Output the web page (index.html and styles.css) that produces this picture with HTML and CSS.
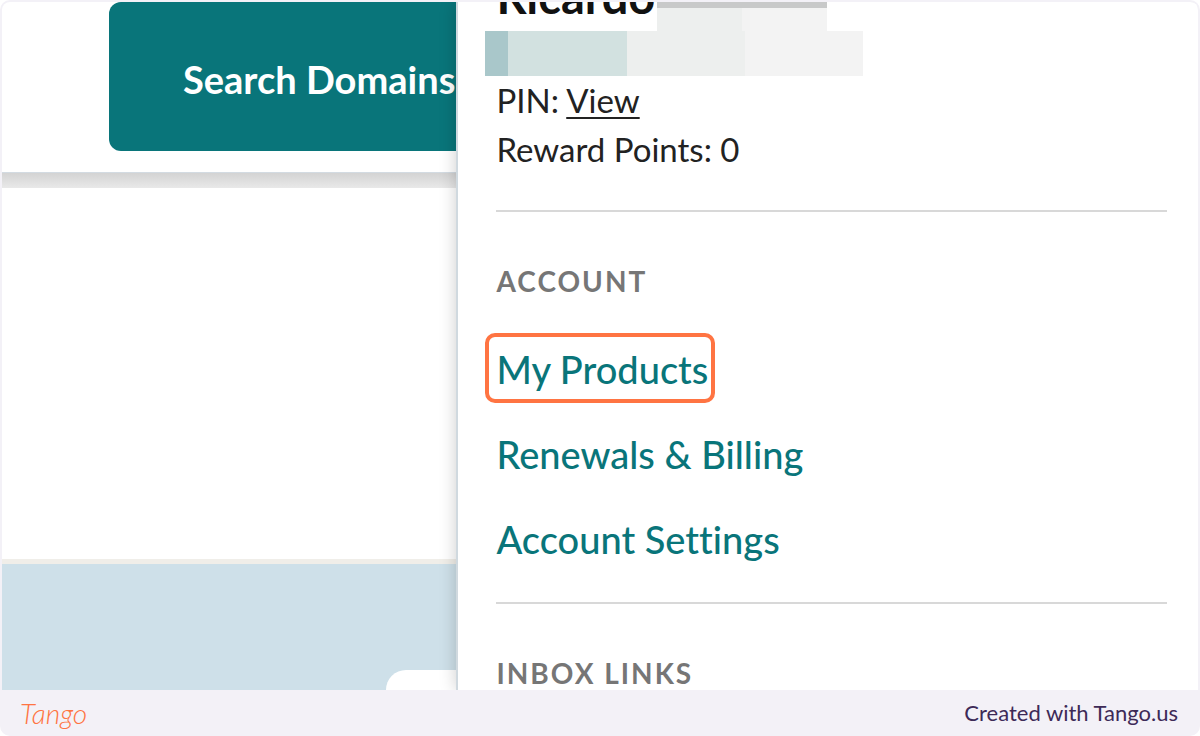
FILE: index.html
```
<!DOCTYPE html>
<html lang="en">
<head>
  <meta charset="UTF-8">
  <meta name="viewport" content="width=device-width, initial-scale=1">
  <title>My Products</title>
  <link rel="stylesheet" href="styles.css">
</head>
<body>
  <div class="frame">
    <div class="screen">
      <main class="page">
        <div class="topbar">
          <button class="search-button" type="button">Search Domains</button>
        </div>
        <div class="topbar-shadow"></div>
        <div class="blank"></div>
        <div class="promo">
          <div class="promo-card"></div>
        </div>
      </main>

      <aside class="panel">
        <div class="name-row">
          <strong class="name">Ricardo</strong>
          <div class="mask mask-name">
            <span class="tone-3"></span>
            <span class="tone-4"></span>
          </div>
        </div>
        <div class="mask mask-id">
          <span class="tone-1"></span>
          <span class="tone-2"></span>
          <span class="tone-3"></span>
          <span class="tone-4"></span>
        </div>
        <p class="info">PIN: <a href="#">View</a></p>
        <p class="info">Reward Points: 0</p>

        <section class="group">
          <h2>Account</h2>
          <ul>
            <li><a class="highlight" href="#">My Products</a></li>
            <li><a href="#">Renewals &amp; Billing</a></li>
            <li><a href="#">Account Settings</a></li>
          </ul>
        </section>

        <section class="group">
          <h2>Inbox Links</h2>
        </section>
      </aside>
    </div>

    <footer class="footer">
      <span class="logo">Tango</span>
      <span class="credit">Created with Tango.us</span>
    </footer>
  </div>
</body>
</html>
```
FILE: styles.css
```
* {
  box-sizing: border-box;
}

body {
  margin: 0;
  background: #fff;
  font-family: Lato, "Open Sans", sans-serif;
  font-variant-ligatures: none;
}

.frame {
  display: flex;
  flex-direction: column;
  height: 100vh;
  padding: 2px 2px 0;
  background: #f3f1f7;
  border-radius: 10px;
  overflow: hidden;
}

.screen {
  flex: 1;
  min-height: 0;
  display: grid;
  grid-template-columns: 38fr 62fr;
  grid-template-rows: 100%;
  background: #fff;
  border-radius: 8px 8px 0 0;
  overflow: hidden;
}

/* page behind the account panel */
.page {
  display: flex;
  flex-direction: column;
  min-width: 0;
  overflow: hidden;
}

.topbar {
  flex: none;
  height: 171px;
  padding-left: 107px;
  border-bottom: 1px solid #d3dbe2;
}

.search-button {
  height: 149px;
  padding: 4px 74px 0;
  border: none;
  border-radius: 12px;
  background: #09757a;
  color: #fff;
  font-family: inherit;
  font-size: 38px;
  font-weight: 700;
  line-height: 44px;
  white-space: nowrap;
}

.topbar-shadow {
  flex: none;
  height: 15px;
  background: linear-gradient(#d3d3d3, #e9e9e9);
}

.blank {
  flex: 1;
}

.promo {
  flex: none;
  height: 131px;
  display: flex;
  justify-content: flex-end;
  align-items: flex-end;
  background: #cee0e9;
  border-top: 5px solid #f0eee9;
}

.promo-card {
  width: 70px;
  height: 20px;
  background: #fff;
  border-top-left-radius: 20px;
}

/* account panel */
.panel {
  position: relative;
  min-width: 0;
  padding: 0 31px 0 38px;
  background: #fff;
  border-left: 2px solid #d0d9df;
  box-shadow: 0 0 16px rgba(0, 0, 0, 0.2);
  overflow: hidden;
}

.name-row {
  display: flex;
  height: 29px;
}

.name {
  width: 161px;
  margin-top: -28px;
  color: #111;
  font-size: 47px;
  line-height: 44px;
}

.mask {
  display: flex;
}

.mask-name {
  width: 170px;
  border-top: 6px solid #c8c9c9;
}

.mask-name span {
  flex: 1;
}

.mask-id {
  width: 378px;
  height: 45px;
  margin-left: -11px;
}

.mask-id span {
  flex: 1;
}

.mask-id .tone-1 {
  flex: none;
  width: 23px;
}

.tone-1 { background: #a9c7ca; }
.tone-2 { background: #d2e1e0; }
.tone-3 { background: #edefee; }
.tone-4 { background: #f3f3f3; }

.info {
  margin: 0;
  color: #222;
  font-size: 33px;
  line-height: 49px;
}

.info a {
  color: inherit;
  text-underline-offset: 4px;
  text-decoration-thickness: 2px;
}

.group {
  margin-top: 19px;
  padding-top: 51px;
  border-top: 2px solid #d8d8d8;
}

.info + .group {
  margin-top: 36px;
}

.group h2 {
  margin: 0 0 29px;
  color: #767676;
  font-size: 28px;
  font-weight: 700;
  line-height: 36px;
  letter-spacing: 2px;
  text-transform: uppercase;
}

.group ul {
  margin: 0;
  padding: 0;
  list-style: none;
}

.group li {
  height: 85px;
  padding-top: 5px;
}

.group li a {
  display: inline-block;
  padding-top: 8px;
  color: #09757a;
  font-size: 38px;
  font-weight: 500;
  line-height: 57px;
  text-decoration: none;
}

.group li .highlight {
  height: 70px;
  margin-left: -11px;
  padding: 4px 3px 0 7px;
  border: 4px solid #ff7442;
  border-radius: 10px;
}

.footer {
  flex: none;
  display: flex;
  justify-content: space-between;
  align-items: center;
  height: 46px;
  padding: 0 20px 0 18px;
}

.logo {
  color: #ff7442;
  font-size: 28px;
  font-style: italic;
  font-weight: 300;
}

.credit {
  color: #3d2a57;
  font-size: 22px;
  line-height: 26px;
}
```
